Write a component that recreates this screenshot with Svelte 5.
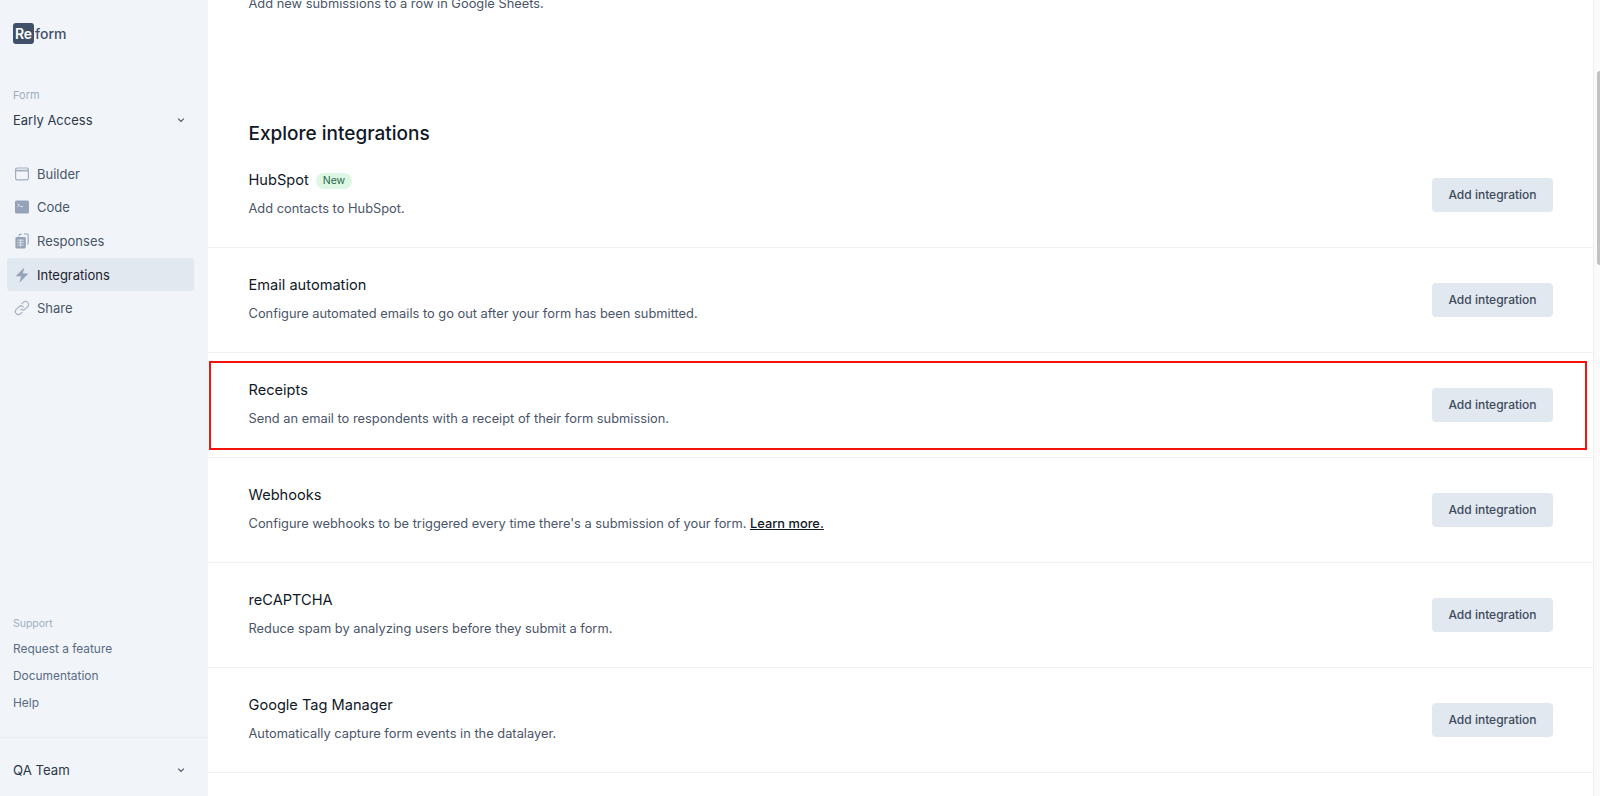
<script>
  const nav = [
    { label: 'Builder', icon: 'builder' },
    { label: 'Code', icon: 'code' },
    { label: 'Responses', icon: 'responses' },
    { label: 'Integrations', icon: 'integrations', active: true },
    { label: 'Share', icon: 'share' }
  ];
  const rows = [
    { title: 'HubSpot', badge: 'New', desc: 'Add contacts to HubSpot.' },
    { title: 'Email automation', desc: 'Configure automated emails to go out after your form has been submitted.' },
    { title: 'Receipts', desc: 'Send an email to respondents with a receipt of their form submission.', marked: true },
    { title: 'Webhooks', desc: "Configure webhooks to be triggered every time there's a submission of your form.", link: 'Learn more.' },
    { title: 'reCAPTCHA', desc: 'Reduce spam by analyzing users before they submit a form.' },
    { title: 'Google Tag Manager', desc: 'Automatically capture form events in the datalayer.' }
  ];
</script>

<div class="page">
  <aside class="sidebar">
    <div class="logo"><span class="mark">Re</span><span class="word">form</span></div>

    <div class="formpick">
      <div class="label">Form</div>
      <div class="select">
        <span>Early Access</span>
        <svg class="chev" viewBox="0 0 20 20"><path d="M6 8l4 4 4-4" /></svg>
      </div>
    </div>

    <nav class="nav">
      {#each nav as item}
        <div class="item" class:active={item.active}>
          <svg class="icon" viewBox="0 0 16 16">
            {#if item.icon === 'builder'}
              <rect x="1.6" y="2" width="12.8" height="11.8" rx="1.6" fill="none" stroke="#a0aec0" stroke-width="1.2" />
              <path d="M1.5 4.6h13" stroke="#a0aec0" stroke-width="1.7" />
            {:else if item.icon === 'code'}
              <rect x="1" y="1.5" width="14" height="13" rx="1.6" fill="#94a3b8" />
              <path d="M3.6 4.8l1.7 1.4-1.7 1.4" fill="none" stroke="#f1f5f9" stroke-width="0.9" />
              <path d="M6.2 7.6h2.6" stroke="#f1f5f9" stroke-width="0.9" />
            {:else if item.icon === 'responses'}
              <path d="M5 3.4V2.6c0-.8.6-1.2 1.2-1.2h1.6M10 1h2.8c.8 0 1.4.6 1.4 1.4v7.4c0 .8-.4 1.3-1 1.3" fill="none" stroke="#94a3b8" stroke-width="1.1" />
              <rect x="1.4" y="4" width="10.4" height="11.4" rx="1.4" fill="#94a3b8" />
              <path d="M3.4 7.2h6.4M3.4 9.6h6.4M3.4 12h6.4M6.6 6.2v7.4" stroke="#f1f5f9" stroke-width="0.7" />
            {:else if item.icon === 'integrations'}
              <path d="M10.4 0.4L1.6 9.2h5.6L5.4 15.8 14.4 6.6H8.8z" fill="#94a3b8" />
            {:else}
              <path d="M6.8 9.2a3 3 0 0 0 4.3 0l2.6-2.6a3 3 0 0 0-4.3-4.3L8 3.7" fill="none" stroke="#a0aec0" stroke-width="1.1" stroke-linecap="round" />
              <path d="M9.2 6.8a3 3 0 0 0-4.3 0L2.3 9.4a3 3 0 0 0 4.3 4.3L8 12.3" fill="none" stroke="#a0aec0" stroke-width="1.1" stroke-linecap="round" />
            {/if}
          </svg>
          <span>{item.label}</span>
        </div>
      {/each}
    </nav>

    <div class="support">
      <div class="label sup">Support</div>
      <div class="link">Request a feature</div>
      <div class="link">Documentation</div>
      <div class="link">Help</div>
    </div>

    <div class="team">
      <span>QA Team</span>
      <svg class="chev" viewBox="0 0 20 20"><path d="M6 8l4 4 4-4" /></svg>
    </div>
  </aside>

  <main class="main">
    <div class="content">
      <p class="prev">Add new submissions to a row in Google Sheets.</p>
      <h2>Explore integrations</h2>
      <div class="rows">
        {#each rows as row}
          <section class="row">
            <div class="text">
              <h3>{row.title}{#if row.badge}<span class="badge">{row.badge}</span>{/if}</h3>
              <p>{row.desc}{#if row.link}{' '}<a href="#top">{row.link}</a>{/if}</p>
            </div>
            <button type="button">Add integration</button>
            {#if row.marked}<div class="mark-box"></div>{/if}
          </section>
        {/each}
      </div>
    </div>
  </main>

  <div class="scrollbar"><div class="thumb"></div></div>
</div>

<style>
  :global(body) {
    margin: 0;
    background: #fff;
  }
  .page {
    display: flex;
    width: 1600px;
    height: 796px;
    overflow: hidden;
    font-family: Inter, "Liberation Sans", sans-serif;
    color: #1a202c;
  }
  .sidebar {
    width: 208px;
    flex: none;
    height: 796px;
    box-sizing: border-box;
    background: #f1f5fa;
    display: flex;
    flex-direction: column;
  }
  .logo {
    display: flex;
    align-items: center;
    margin: 23px 0 0 13px;
    height: 21px;
  }
  .mark {
    background: #3f5068;
    color: #fff;
    font-weight: 600;
    font-size: 14px;
    width: 21px;
    height: 21px;
    border-radius: 3px;
    display: flex;
    align-items: center;
    justify-content: center;
  }
  .word {
    color: #3f5068;
    font-weight: 500;
    font-size: 14px;
    margin-left: 1px;
  }
  .formpick {
    margin: 43px 0 0;
    padding: 0 13px;
  }
  .label {
    font-size: 11px;
    line-height: 16px;
    color: #a0aec0;
  }
  .select {
    display: flex;
    align-items: center;
    justify-content: space-between;
    padding-right: 7px;
    margin-top: 7px;
    font-size: 13px;
    line-height: 20px;
    color: #2d3748;
  }
  .chev {
    width: 14px;
    height: 14px;
    fill: none;
    stroke: #4a5568;
    stroke-width: 1.6;
  }
  .nav {
    margin: 27px 14px 0 7px;
    display: flex;
    flex-direction: column;
  }
  .item {
    height: 33.6px;
    display: flex;
    align-items: center;
    gap: 7px;
    padding-left: 7px;
    border-radius: 4px;
    font-size: 13px;
    color: #4a5568;
  }
  .item.active {
    background: #e2e8f0;
    color: #1a202c;
  }
  .icon {
    width: 16px;
    height: 16px;
    flex: none;
  }
  .support {
    margin-top: auto;
    padding: 0 13px;
  }
  .link {
    font-size: 11.9px;
    line-height: 27px;
    color: #5a6b82;
  }
  .label.sup {
    font-size: 10.5px;
    margin-bottom: 3px;
  }
  .team {
    margin-top: 21px;
    height: 59px;
    border-top: 1px solid #e8edf3;
    display: flex;
    align-items: center;
    justify-content: space-between;
    padding: 5px 20px 0 13px;
    box-sizing: border-box;
    font-size: 13.2px;
    color: #2d3748;
  }
  .main {
    flex: 1;
    min-width: 0;
    height: 796px;
    overflow: hidden;
  }
  .content {
    margin-top: -6px;
  }
  .prev {
    margin: 0;
    padding-left: 40.5px;
    font-size: 12.85px;
    line-height: 20px;
    color: #4a5568;
  }
  h2 {
    margin: 106px 0 0;
    padding-left: 40.5px;
    font-size: 19px;
    line-height: 28px;
    font-weight: 500;
    color: #111827;
  }
  .rows {
    margin-top: -5px;
  }
  .row {
    position: relative;
    height: 105px;
    box-sizing: border-box;
    border-bottom: 1px solid #edf0f5;
    padding: 0 40px 0 40.5px;
    display: flex;
    align-items: center;
    justify-content: space-between;
  }
  .text {
    padding-bottom: 1px;
  }
  h3 {
    margin: 0;
    font-size: 14.6px;
    line-height: 24px;
    font-weight: 400;
    color: #111827;
    display: flex;
    align-items: center;
  }
  .text p {
    margin: 5px 0 0;
    font-size: 12.85px;
    line-height: 24px;
    color: #4a5568;
  }
  .text a {
    color: #111827;
    font-weight: 500;
    text-decoration: underline;
  }
  .badge {
    margin-left: 7px;
    background: #def7e5;
    color: #276749;
    font-size: 10.5px;
    line-height: 16px;
    padding: 0 7px;
    border-radius: 9px;
    transform: translateY(1px);
  }
  button {
    width: 121px;
    height: 34px;
    border: 0;
    border-radius: 4px;
    background: #e2e8f0;
    color: #3d4a5c;
    font: 500 12px Inter, "Liberation Sans", sans-serif;
    padding: 0 0 1px;
  }
  .mark-box {
    position: absolute;
    left: 1px;
    top: 8px;
    width: 1374px;
    height: 85px;
    border: 2px solid #f4120c;
  }
  .scrollbar {
    width: 7px;
    flex: none;
    background: #fafafa;
    border-left: 1px solid #eeeeee;
    box-sizing: border-box;
    position: relative;
  }
  .thumb {
    position: absolute;
    left: 3px;
    right: 0;
    top: 71px;
    height: 194px;
    background: #c2c2c2;
    border-radius: 3px 0 0 3px;
  }
</style>
